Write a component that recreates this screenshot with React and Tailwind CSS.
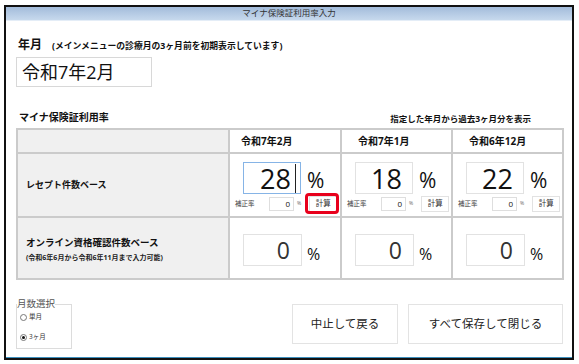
const cols = [
  { label: "令和7年2月", hp: "pl-[11px]", rate: "28", online: "0", focused: true },
  { label: "令和7年1月", hp: "pl-[16px]", rate: "18", online: "0" },
  { label: "令和6年12月", hp: "pl-[16px]", rate: "22", online: "0" },
];

function RateCell({ col }) {
  return (
    <div className="bg-white pl-[13px] pt-[8px]">
      <div className="flex items-end">
        <div
          className={`flex h-[32px] w-[58px] items-center justify-end border bg-white text-[27px] leading-none ${
            col.focused ? "border-[#86b4e6] pr-[4px]" : "border-[#e2e2e2] pr-[10px]"
          }`}
        >
          <span>{col.rate}</span>
          {col.focused && <span className="ml-[4px] h-[29px] w-px bg-[#222]" />}
        </div>
        <span className="mb-[3px] ml-[6px] text-[21px] leading-none">%</span>
      </div>
      <div className="-ml-[8px] mt-[2px] flex h-[16px] items-center">
        <span className="w-[20px] whitespace-nowrap text-[6.5px] text-[#444]">補正率</span>
        <span className="ml-[14px] flex h-[14px] w-[25px] items-center justify-end border border-[#dedede] pr-[3px] text-[8px]">
          0
        </span>
        <span className="ml-[3px] text-[5px] text-[#666]">%</span>
        <span className="relative ml-[8px] flex h-[16px] w-[28px] items-center justify-center border border-[#e2e2e2] text-[7.5px] text-[#333]">
          計算
          {col.focused && (
            <span className="absolute -bottom-[3px] -left-[5px] -right-[3px] -top-[4px] rounded-[4px] border-[3px] border-[#e8001c]" />
          )}
        </span>
      </div>
    </div>
  );
}

function OnlineCell({ col }) {
  return (
    <div className="flex items-start bg-white pl-[13px] pt-[16px]">
      <div className="flex h-[32px] w-[59px] items-center justify-end border border-[#e2e2e2] pr-[11px] text-[23px] leading-none text-[#333]">
        {col.online}
      </div>
      <span className="ml-[5px] mt-[12px] text-[16px] leading-none">%</span>
    </div>
  );
}

function Radio({ checked, label }) {
  return (
    <div className="flex h-[10px] items-center">
      <span className="flex h-[7px] w-[7px] items-center justify-center rounded-full border border-[#777] bg-white">
        {checked && <span className="h-[3px] w-[3px] rounded-full bg-[#111]" />}
      </span>
      <span className="ml-[2px] text-[6.5px] text-[#333]">{label}</span>
    </div>
  );
}

export default function App() {
  return (
    <div className="h-[364px] w-[579px] bg-white pl-[4px] pt-[5px] font-['Open_Sans','Noto_Sans_CJK_JP',sans-serif] text-[#111]">
      <div className="flex h-[355px] w-[570px] flex-col border-2 border-[#111]">
        <div className="flex h-[14px] shrink-0 items-center justify-center border-b border-[#e4edf7] bg-gradient-to-b from-[#a3bcdb] to-[#c7d9ed] text-[8.5px] leading-none text-[#333]">
          マイナ保険証利用率入力
        </div>

        <div className="flex flex-1 flex-col border-b border-[#3c8fbd] pl-[10px]">
          <div className="mt-[16px] flex items-baseline pl-[2px]">
            <span className="text-[12px] font-bold leading-[16px]">年月</span>
            <span className="ml-[10px] text-[8.8px] font-bold leading-[16px]">
              (メインメニューの診療月の3ヶ月前を初期表示しています)
            </span>
          </div>

          <div className="mt-[3px] flex h-[30px] w-[136px] items-center border border-[#d8d8d8] pl-[5px] text-[18px] leading-none">
            令和7年2月
          </div>

          <div className="mt-[25px] flex h-[16px] w-[548px] items-start justify-between pr-[33px]">
            <span className="pl-[3px] text-[10px] font-bold leading-none">マイナ保険証利用率</span>
            <span className="mt-[3px] text-[8.5px] font-bold leading-none">指定した年月から過去3ヶ月分を表示</span>
          </div>

          <div className="grid w-[548px] grid-cols-[210px_110px_109px_109px] grid-rows-[22px_62px_60px] gap-[2px] bg-[#cbcbcb] p-[2px]">
            <div className="bg-[#f0f0f0]" />
            {cols.map((c) => (
              <div key={c.label} className={`flex items-center bg-white text-[10px] font-bold ${c.hp}`}>
                {c.label}
              </div>
            ))}

            <div className="flex items-center bg-[#f0f0f0] pl-[8px] text-[9px] font-bold">
              レセプト件数ベース
            </div>
            {cols.map((c) => (
              <RateCell key={c.label} col={c} />
            ))}

            <div className="flex flex-col justify-center bg-[#f0f0f0] pl-[8px] pt-[2px]">
              <span className="text-[9.5px] font-bold leading-[14px]">オンライン資格確認件数ベース</span>
              <span className="mt-[3px] text-[7px] font-bold leading-[10px] text-[#222]">
                (令和6年6月から令和6年11月まで入力可能)
              </span>
            </div>
            {cols.map((c) => (
              <OnlineCell key={c.label} col={c} />
            ))}
          </div>

          <div className="mt-[18px] flex items-start justify-between pr-[9px]">
            <fieldset className="h-[51px] w-[56px] border border-[#dcdcdc] pl-[3px]">
              <legend className="-ml-[3px] text-[9.5px] leading-[12px] text-[#555]">月数選択</legend>
              <div className="mt-[2px] flex flex-col gap-[10px]">
                <Radio label="単月" />
                <Radio checked label="3ヶ月" />
              </div>
            </fieldset>

            <div className="mt-[6px] flex gap-[10px]">
              <button
                type="button"
                className="flex h-[40px] w-[106px] items-center justify-center border border-[#e3e3e3] bg-white text-[11.5px] text-[#222]"
              >
                中止して戻る
              </button>
              <button
                type="button"
                className="flex h-[40px] w-[155px] items-center justify-center border border-[#e3e3e3] bg-white text-[11.5px] text-[#222]"
              >
                すべて保存して閉じる
              </button>
            </div>
          </div>
        </div>
      </div>
    </div>
  );
}
